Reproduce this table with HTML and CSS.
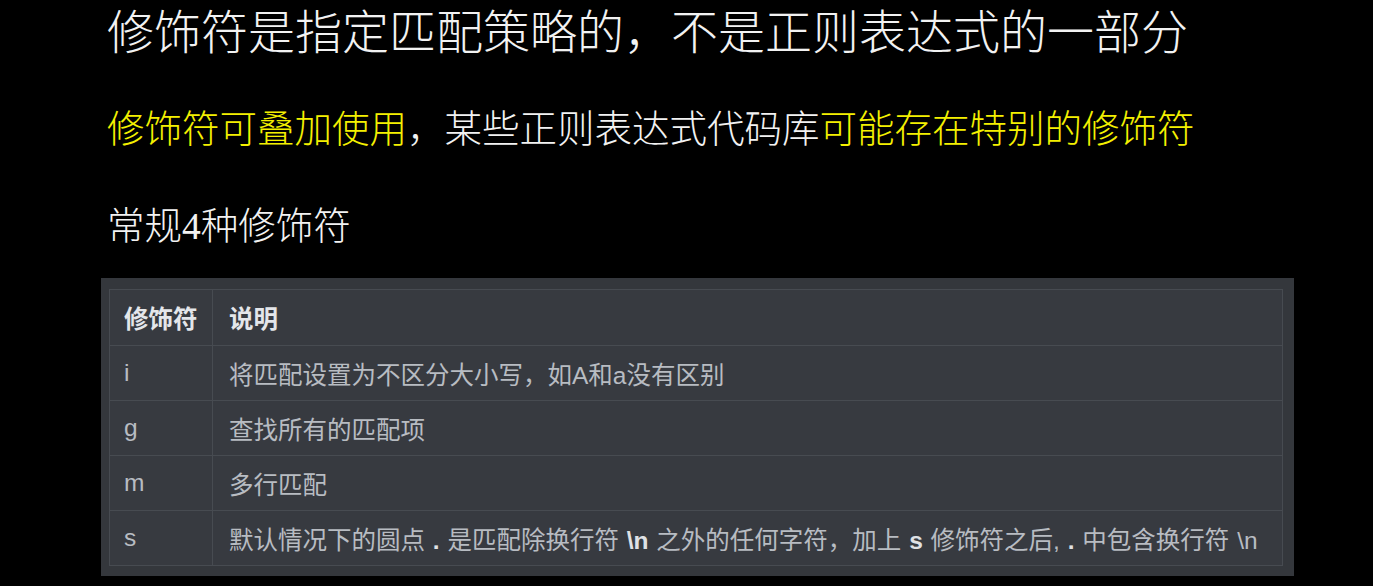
FILE: index.html
```html
<!DOCTYPE html>
<html lang="zh">
<head>
<meta charset="utf-8">
<link rel="stylesheet" href="styles.css">
</head>
<body>
<div class="page">
  <h1 class="title">修饰符是指定匹配策略的，不是正则表达式的一部分</h1>
  <p class="line"><span class="hl">修饰符可叠加使用</span>，某些正则表达式代码库<span class="hl">可能存在特别的修饰符</span></p>
  <p class="line sub">常规4种修饰符</p>
  <div class="panel">
    <table class="tbl">
      <thead>
        <tr><th class="c1">修饰符</th><th>说明</th></tr>
      </thead>
      <tbody>
        <tr><td class="c1">i</td><td>将匹配设置为不区分大小写，如A和a没有区别</td></tr>
        <tr><td class="c1">g</td><td>查找所有的匹配项</td></tr>
        <tr><td class="c1">m</td><td>多行匹配</td></tr>
        <tr><td class="c1">s</td><td>默认情况下的圆点 <b>.</b> 是匹配除换行符 <b>\n</b> 之外的任何字符，加上 <b>s</b> 修饰符之后, <b>.</b> 中包含换行符 \n</td></tr>
      </tbody>
    </table>
  </div>
</div>
</body>
</html>
```

FILE: styles.css
```css
html, body {
  margin: 0;
  padding: 0;
  background: #000;
}
.page {
  padding-left: 101px;
  width: 1193px;
  display: flex;
  flex-direction: column;
}
.title {
  margin: 0 0 38px 6px;
  font-family: "Liberation Serif", "Noto Sans CJK SC", serif;
  font-weight: 300;
  font-size: 47px;
  line-height: 66px;
  color: #f2f2f2;
}
.line {
  margin: 0 0 46px 6px;
  font-family: "Liberation Serif", "Noto Sans CJK SC", serif;
  font-weight: 300;
  font-size: 37.5px;
  line-height: 51px;
  color: #f2f2f2;
}
.line.sub {
  margin-bottom: 26px;
}
.hl {
  color: #f4f000;
}
.panel {
  background: #34373c;
  padding: 11px 11px 10px 8px;
}
.tbl {
  width: 100%;
  border-collapse: collapse;
  table-layout: fixed;
  background: #373a40;
  font-family: "Liberation Sans", "Noto Sans CJK SC", sans-serif;
  font-size: 24.5px;
  word-spacing: 1px;
  color: #b8bcc2;
}
.tbl th, .tbl td {
  border: 1px solid #474b51;
  height: 55px;
  padding: 0 8px 0 16px;
  text-align: left;
  white-space: nowrap;
  overflow: visible;
  box-sizing: border-box;
}
.tbl th {
  height: 56px;
  font-weight: 700;
  color: #e4e6ea;
}
.tbl .c1 {
  width: 103px;
  padding-left: 14px;
  padding-right: 4px;
}
.tbl b {
  font-weight: 700;
  color: #dfe1e5;
}
```
